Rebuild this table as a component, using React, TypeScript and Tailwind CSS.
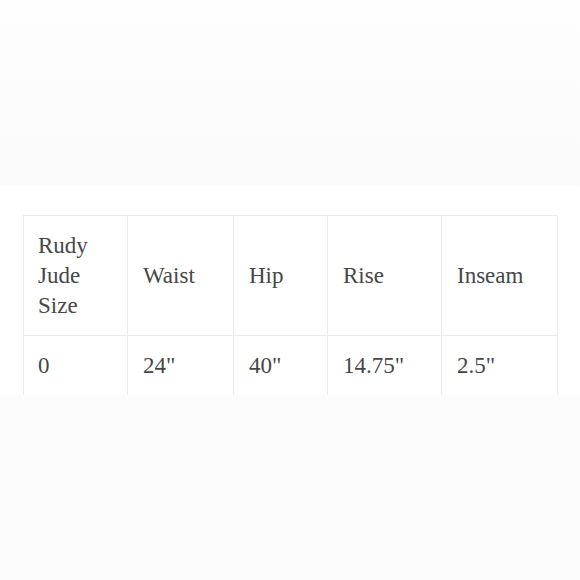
const headers = ['Rudy Jude Size', 'Waist', 'Hip', 'Rise', 'Inseam'];
const row = ['0', '24"', '40"', '14.75"', '2.5"'];
const widths = ['w-[104px]', 'w-[106px]', 'w-[94px]', 'w-[114px]', 'w-[116px]'];

export default function App() {
  return (
    <div className="w-[580px] h-[580px] flex flex-col bg-white font-['Liberation_Serif',serif] text-[#474747]">
      <div className="h-[186px] bg-gradient-to-b from-[#fefefe] to-[#fbfbfb]" />
      <div className="h-[209px] overflow-hidden bg-white px-[23px] pt-[29px]">
        <table className="border-collapse table-fixed w-[535px] text-[23px] leading-[30px]">
          <thead>
            <tr>
              {headers.map((h, i) => (
                <th
                  key={h}
                  className={`${widths[i]} border border-[#ebebeb] pl-[15px] pr-[10px] pt-[15px] pb-[14px] text-left font-normal align-middle first:pl-[14px]`}
                >
                  {h.split(' ').map((w) => (
                    <div key={w}>{w}</div>
                  ))}
                </th>
              ))}
            </tr>
          </thead>
          <tbody>
            <tr>
              {row.map((c, i) => (
                <td key={i} className="border border-[#ebebeb] pl-[15px] pr-[10px] pt-[15px] pb-[16px] first:pl-[14px]">
                  {c}
                </td>
              ))}
            </tr>
          </tbody>
        </table>
      </div>
      <div className="flex-1 bg-[#fcfcfc]" />
    </div>
  );
}
